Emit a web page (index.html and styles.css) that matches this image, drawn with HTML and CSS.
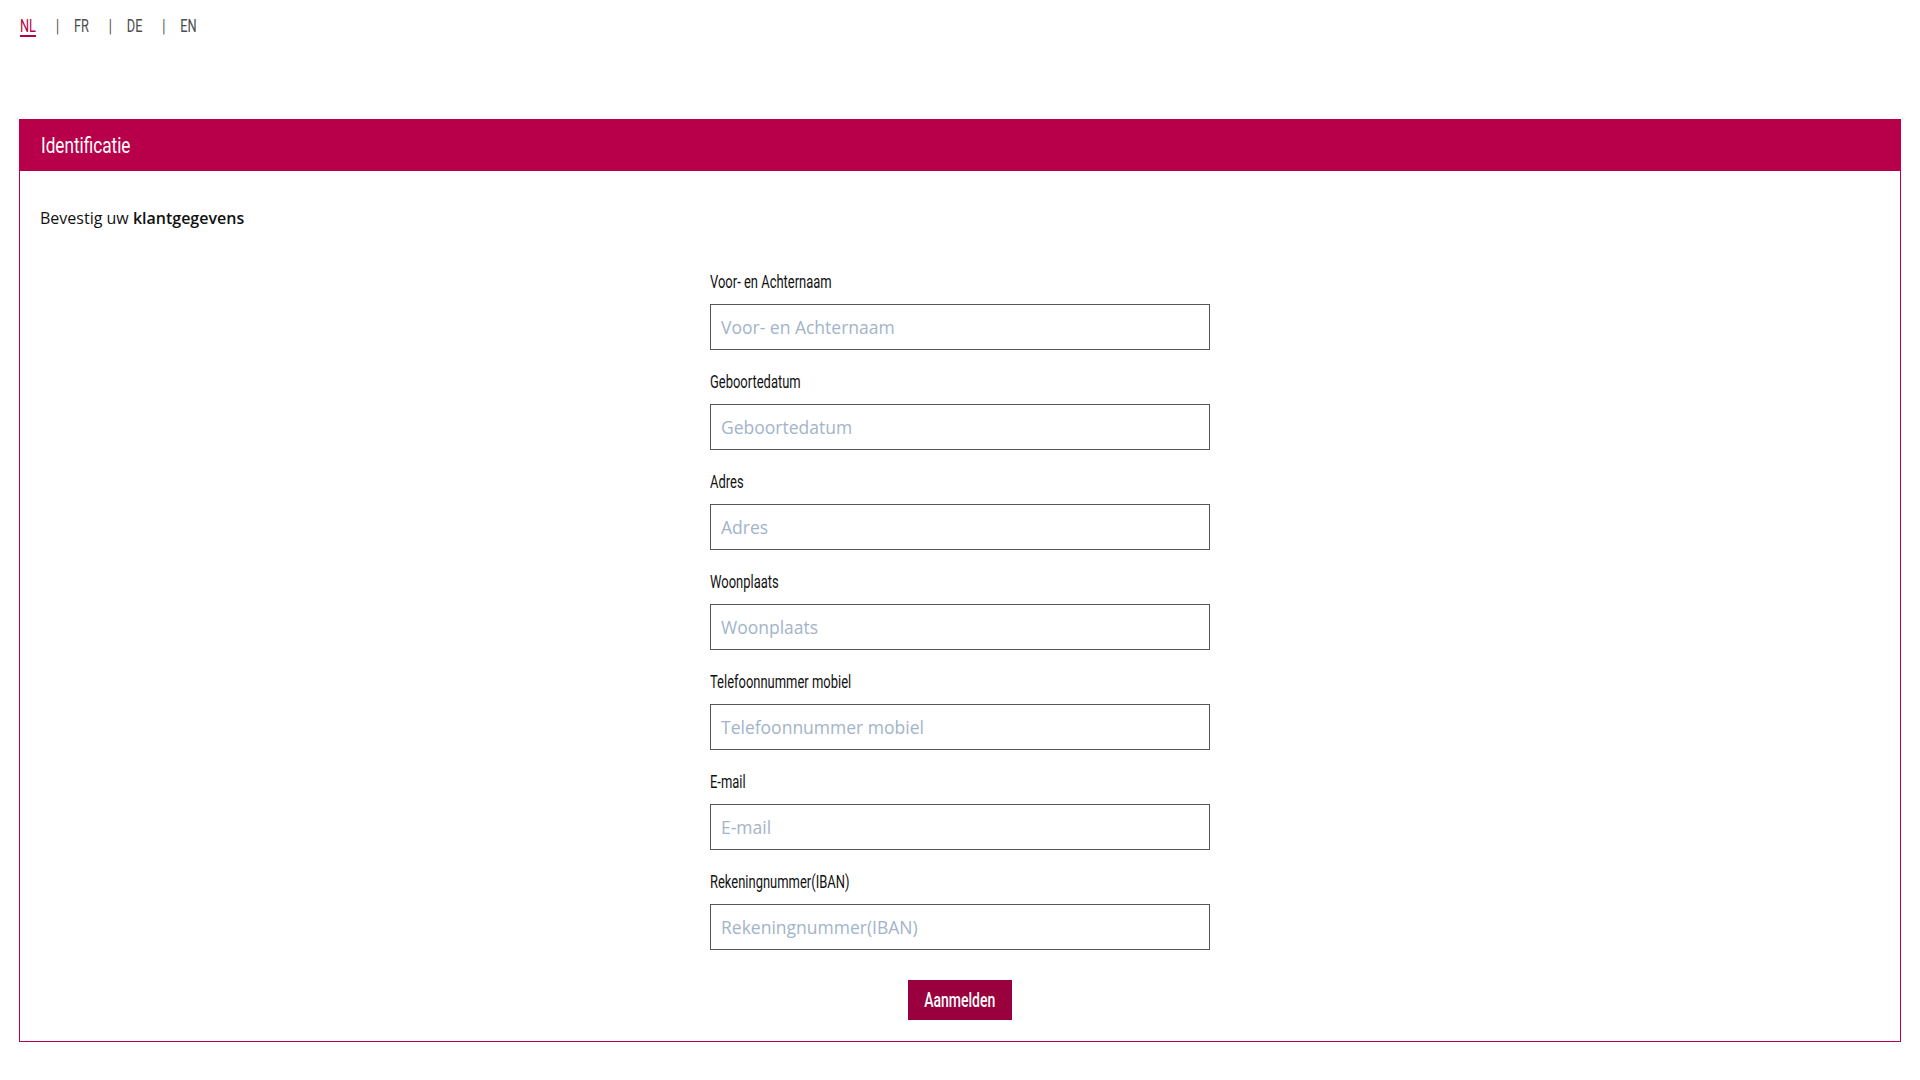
FILE: index.html
```html
<!DOCTYPE html>
<html lang="nl">
<head>
<meta charset="utf-8">
<title>Identificatie</title>
<link rel="stylesheet" href="styles.css">
</head>
<body>
<nav class="lang-bar">
  <div class="lang-list"><a class="lang active" href="#">NL</a><span class="sep">|</span><a class="lang" href="#">FR</a><span class="sep">|</span><a class="lang" href="#">DE</a><span class="sep">|</span><a class="lang" href="#">EN</a></div>
</nav>
<section class="panel">
  <header class="panel-head"><h1 class="panel-title">Identificatie</h1></header>
  <div class="panel-body">
    <p class="intro">Bevestig uw <strong>klantgegevens</strong></p>
    <form class="form">
      <div class="field"><label class="label">Voor- en Achternaam</label><input class="input" type="text" placeholder="Voor- en Achternaam"></div>
      <div class="field"><label class="label">Geboortedatum</label><input class="input" type="text" placeholder="Geboortedatum"></div>
      <div class="field"><label class="label">Adres</label><input class="input" type="text" placeholder="Adres"></div>
      <div class="field"><label class="label">Woonplaats</label><input class="input" type="text" placeholder="Woonplaats"></div>
      <div class="field"><label class="label">Telefoonnummer mobiel</label><input class="input" type="text" placeholder="Telefoonnummer mobiel"></div>
      <div class="field"><label class="label">E-mail</label><input class="input" type="text" placeholder="E-mail"></div>
      <div class="field"><label class="label">Rekeningnummer(IBAN)</label><input class="input" type="text" placeholder="Rekeningnummer(IBAN)"></div>
      <div class="actions"><button class="btn" type="button"><span class="btn-text">Aanmelden</span></button></div>
    </form>
  </div>
</section>
</body>
</html>
```
FILE: styles.css
```css
* { box-sizing: border-box; }
body {
  margin: 0;
  background: #fff;
  font-family: "Open Sans", "Liberation Sans", sans-serif;
  color: #111;
}
/* condensed display face (Oswald-like) */
.lang-list,
.panel-title,
.label,
.btn {
  font-family: Roboto, "Liberation Sans", sans-serif;
  font-weight: 400;
}
.lang-bar {
  padding: 14px 20px 0;
  height: 38px;
}
.lang-list {
  display: inline-flex;
  align-items: center;
  font-size: 18px;
  line-height: 24px;
  transform: scaleX(0.71);
  transform-origin: 0 50%;
}
.lang { color: #4d4d4d; text-decoration: none; }
.lang.active { color: #b8004a; text-decoration: underline; text-decoration-thickness: 2px; text-underline-offset: 3px; }
.sep { color: #4d4d4d; margin: 0 21px 0 28px; }
.panel {
  margin: 81px 19px 0;
  border: 1px solid #b8004a;
  border-top: 0;
}
.panel-head {
  height: 52px;
  background: #b8004a;
  display: flex;
  align-items: center;
  padding: 0 21px;
}
.panel-title {
  margin: 0;
  color: #fff;
  font-size: 22px;
  transform: scaleX(0.78);
  transform-origin: 0 50%;
}
.panel-body { padding: 35px 20px 21px; }
.intro { margin: 0; font-size: 16px; line-height: 24px; color: #111; }
.intro strong { font-weight: 600; }
.form { width: 500px; margin: 40px auto 0; }
.field { display: flex; flex-direction: column; margin-bottom: 20px; }
.label {
  align-self: flex-start;
  font-size: 18px;
  line-height: 24px;
  color: #111;
  margin-bottom: 10px;
  transform: scaleX(0.72);
  transform-origin: 0 50%;
}
.input {
  height: 46px;
  border: 1px solid #555;
  border-radius: 0;
  padding: 0 10px;
  font-family: "Open Sans", sans-serif;
  font-size: 17.5px;
  color: #333;
  outline: none;
}
.input::placeholder { color: #a2b4c9; }
.actions { display: flex; justify-content: center; margin-top: 30px; }
.btn {
  width: 104px;
  height: 40px;
  padding: 0;
  border: 0;
  border-radius: 0;
  background: #99003d;
  color: #fff;
  font-size: 20px;
  font-weight: 500;
  cursor: pointer;
}
.btn-text { display: inline-block; transform: scaleX(0.7); }
```
